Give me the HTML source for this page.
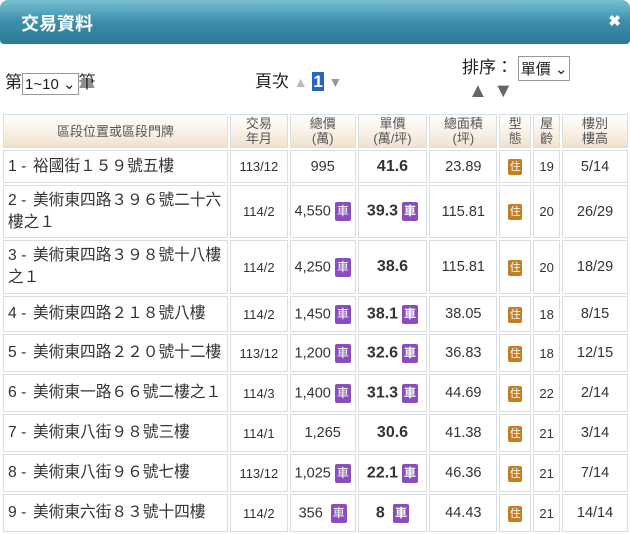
<!DOCTYPE html>
<html><head><meta charset="utf-8"><style>
*{margin:0;padding:0;box-sizing:border-box}
body{width:630px;height:534px;overflow:hidden;background:#fff;font-family:"Liberation Sans","Noto Sans CJK TC",sans-serif;color:#333;position:relative}
.bar{position:absolute;left:0;top:0;width:630px;height:44px;border-radius:8px 8px 4px 4px;background:linear-gradient(#78bfd2,#3b8eaa 50%,#2a7b96);}
.bar .t{position:absolute;left:21px;top:10px;color:#fff;font-weight:bold;font-size:18px}
.bar .x{position:absolute;right:9px;top:12px;color:#fff;font-weight:bold;font-size:15px}
.abs{position:absolute;font-size:17px;color:#222}
.sel{display:inline-block;border:1px solid #999;background:#fff;font-size:15px;padding:1px 2px;vertical-align:middle}
table{position:absolute;left:1px;top:112px;border-collapse:separate;border-spacing:2px;table-layout:fixed}
td,th{border:1px solid #d8dfe0;text-align:center;font-size:14.5px;font-weight:normal;color:#333;padding:0;overflow:hidden}
th{background:linear-gradient(#fff,#f7efe4 60%,#efe2cf);color:#555;font-size:13px;line-height:15px;height:34px}
td.a{text-align:left;padding-left:4px;padding-right:2px;font-size:15.7px;line-height:22px}
td.a i{font-style:normal;display:inline-block;width:25px}
td.b{font-weight:bold;font-size:16px}
.c{display:inline-block;background:#8a4dbf;color:#fff;font-size:12px;width:16px;height:19px;line-height:19px;border-radius:2px;vertical-align:middle;margin-left:4px}
.z{display:inline-block;background:#c08022;color:#fff;font-size:11px;width:14px;height:16px;line-height:16px;border-radius:2px}
</style></head><body>
<div class="bar"><span class="t">交易資料</span><span class="x">✖</span></div>
<div class="abs" style="left:5px;top:68px">第<span class="sel">1~10 ⌄</span>筆</div>
<div class="abs" style="left:255px;top:67px">頁次 <span style="color:#bbb;font-size:14px">▲</span> <span style="background:#2a65b8;color:#fff;font-weight:bold;padding:0 1px">1</span> <span style="color:#999;font-size:14px">▼</span></div>
<div class="abs" style="left:462px;top:53px">排序： <span class="sel">單價 ⌄</span></div>
<div class="abs" style="left:468px;top:80px;color:#666;font-size:20px">▲ ▼</div>
<table>
<colgroup><col style="width:226px"><col style="width:58px"><col style="width:66px"><col style="width:70px"><col style="width:68px"><col style="width:32px"><col style="width:27px"><col style="width:66px"></colgroup>
<tr><th>區段位置或區段門牌</th><th>交易<br>年月</th><th>總價<br>(萬)</th><th>單價<br>(萬/坪)</th><th>總面積<br>(坪)</th><th>型<br>態</th><th>屋<br>齡</th><th>樓別<br>樓高</th></tr>
<tr style="height:33px"><td class="a"><i>1 -</i>裕國街１５９號五樓</td><td style="font-size:13px">113/12</td><td>995</td><td class="b">41.6</td><td>23.89</td><td><span class="z">住</span></td><td style="font-size:13px">19</td><td>5/14</td></tr>
<tr style="height:53px"><td class="a"><i>2 -</i>美術東四路３９６號二十六樓之１</td><td style="font-size:13px">114/2</td><td>4,550<span class="c">車</span></td><td class="b">39.3<span class="c">車</span></td><td>115.81</td><td><span class="z">住</span></td><td style="font-size:13px">20</td><td>26/29</td></tr>
<tr style="height:54px"><td class="a"><i>3 -</i>美術東四路３９８號十八樓之１</td><td style="font-size:13px">114/2</td><td>4,250<span class="c">車</span></td><td class="b">38.6</td><td>115.81</td><td><span class="z">住</span></td><td style="font-size:13px">20</td><td>18/29</td></tr>
<tr style="height:36px"><td class="a"><i>4 -</i>美術東四路２１８號八樓</td><td style="font-size:13px">114/2</td><td>1,450<span class="c">車</span></td><td class="b">38.1<span class="c">車</span></td><td>38.05</td><td><span class="z">住</span></td><td style="font-size:13px">18</td><td>8/15</td></tr>
<tr style="height:38px"><td class="a"><i>5 -</i>美術東四路２２０號十二樓</td><td style="font-size:13px">113/12</td><td>1,200<span class="c">車</span></td><td class="b">32.6<span class="c">車</span></td><td>36.83</td><td><span class="z">住</span></td><td style="font-size:13px">18</td><td>12/15</td></tr>
<tr style="height:38px"><td class="a"><i>6 -</i>美術東一路６６號二樓之１</td><td style="font-size:13px">114/3</td><td>1,400<span class="c">車</span></td><td class="b">31.3<span class="c">車</span></td><td>44.69</td><td><span class="z">住</span></td><td style="font-size:13px">22</td><td>2/14</td></tr>
<tr style="height:38px"><td class="a"><i>7 -</i>美術東八街９８號三樓</td><td style="font-size:13px">114/1</td><td>1,265</td><td class="b">30.6</td><td>41.38</td><td><span class="z">住</span></td><td style="font-size:13px">21</td><td>3/14</td></tr>
<tr style="height:38px"><td class="a"><i>8 -</i>美術東八街９６號七樓</td><td style="font-size:13px">113/12</td><td>1,025<span class="c">車</span></td><td class="b">22.1<span class="c">車</span></td><td>46.36</td><td><span class="z">住</span></td><td style="font-size:13px">21</td><td>7/14</td></tr>
<tr style="height:38px"><td class="a"><i>9 -</i>美術東六街８３號十四樓</td><td style="font-size:13px">114/2</td><td>356 <span class="c">車</span></td><td class="b">8 <span class="c">車</span></td><td>44.43</td><td><span class="z">住</span></td><td style="font-size:13px">21</td><td>14/14</td></tr>
</table>
</body></html>
